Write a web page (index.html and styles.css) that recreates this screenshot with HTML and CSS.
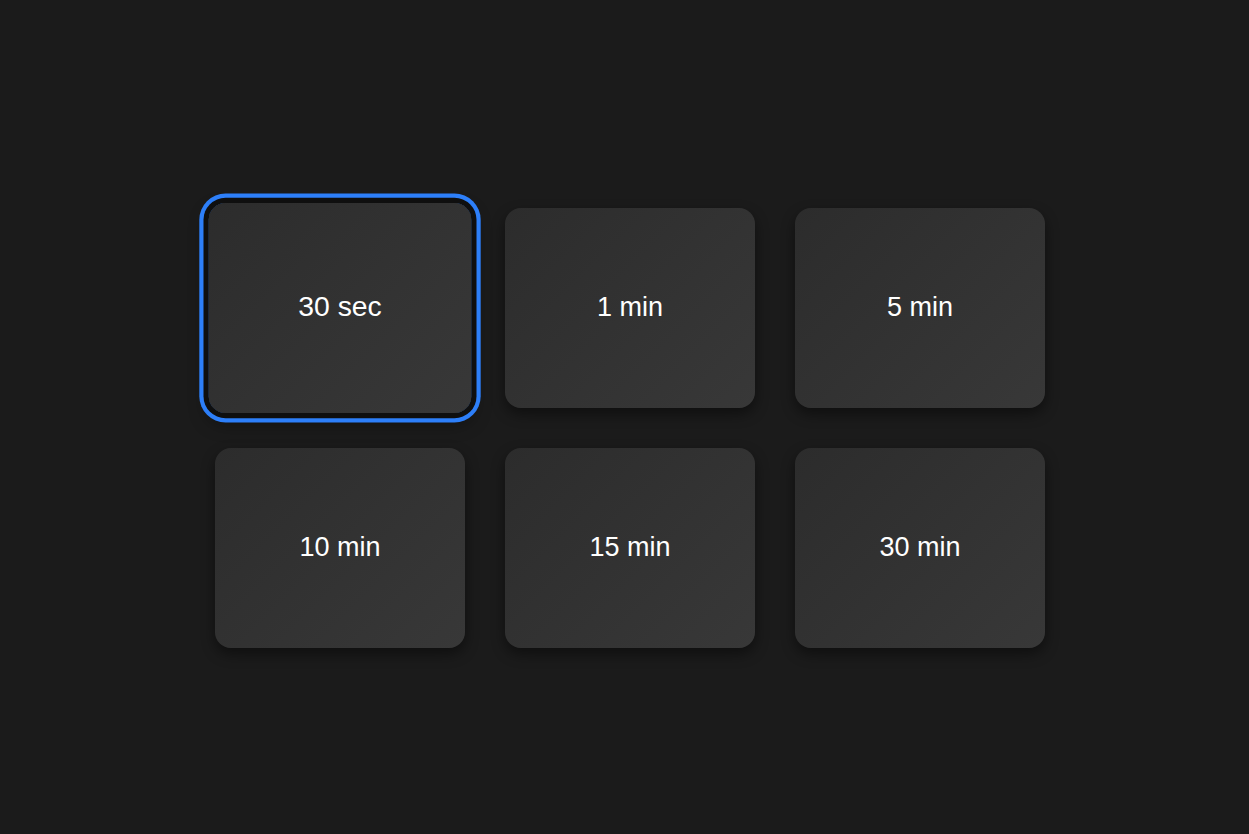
FILE: index.html
```html
<!DOCTYPE html>
<html lang="en">
<head>
    <meta charset="UTF-8">
    <meta name="viewport" content="width=device-width, initial-scale=1.0">
    <title>Timer Presets</title>
    <link rel="stylesheet" href="styles.css">
</head>
<body>
    <div class="wrap">
        <div class="grid">
            <button class="card selected">30 sec</button>
            <button class="card">1 min</button>
            <button class="card">5 min</button>
            <button class="card">10 min</button>
            <button class="card">15 min</button>
            <button class="card">30 min</button>
        </div>
    </div>
</body>
</html>
```

FILE: styles.css
```css
html, body {
    margin: 0;
    height: 100%;
}
body {
    background-color: #1b1b1b;
    color: white;
    font-family: "Liberation Sans", Arial, sans-serif;
}
.wrap {
    height: 100%;
    display: flex;
    align-items: center;
    justify-content: center;
    padding: 22px 0 0 11px;
    box-sizing: border-box;
}
.grid {
    display: grid;
    grid-template-columns: repeat(3, 250px);
    grid-auto-rows: 200px;
    gap: 40px;
}
.card {
    border: none;
    border-radius: 16px;
    background: linear-gradient(135deg, #2c2c2c, #383838);
    color: white;
    font-family: inherit;
    font-size: 27px;
    padding: 0 0 2px;
    box-shadow: 0 6px 14px rgba(0, 0, 0, 0.45);
    cursor: pointer;
}
.card.selected {
    transform: scale(1.05);
    box-shadow: 0 0 0 5px #0f0f0f, 0 0 0 9px #2d7ff9, 0 8px 18px rgba(0, 0, 0, 0.45);
}
```
